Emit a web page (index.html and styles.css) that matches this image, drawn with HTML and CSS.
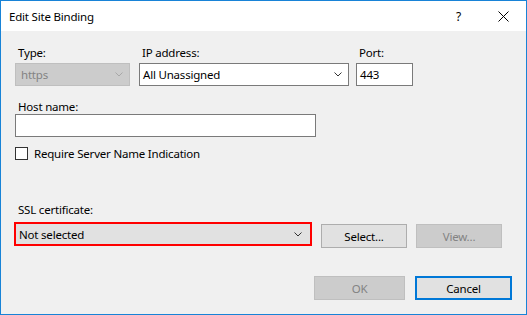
FILE: index.html
```html
<!DOCTYPE html>
<html lang="en">
<head>
    <meta charset="UTF-8">
    <title>Edit Site Binding</title>
    <link rel="stylesheet" href="styles.css">
</head>
<body>
    <div class="window">
        <div class="titlebar">
            <span class="title">Edit Site Binding</span>
            <span class="help">?</span>
            <span class="close">
                <svg width="11" height="11" viewBox="0 0 11 11"><path d="M0.5 0.5 L10.5 10.5 M10.5 0.5 L0.5 10.5" stroke="#000" stroke-width="1" fill="none"/></svg>
            </span>
        </div>
        <div class="content">
            <div class="row top-row">
                <div class="field f-type">
                    <label>Type:</label>
                    <div class="combo disabled">
                        <span>https</span>
                        <svg class="chev" width="8" height="5" viewBox="0 0 8 5"><polyline points="0.5,0.5 4,4 7.5,0.5" stroke="#a8a8a8" fill="none"/></svg>
                    </div>
                </div>
                <div class="field f-ip">
                    <label>IP address:</label>
                    <div class="combo">
                        <span>All Unassigned</span>
                        <svg class="chev" width="8" height="5" viewBox="0 0 8 5"><polyline points="0.5,0.5 4,4 7.5,0.5" stroke="#333" fill="none"/></svg>
                    </div>
                </div>
                <div class="field f-port">
                    <label>Port:</label>
                    <div class="textbox">443</div>
                </div>
            </div>
            <div class="field f-host">
                <label>Host name:</label>
                <div class="textbox"></div>
            </div>
            <div class="check-row">
                <span class="checkbox"></span>
                <span>Require Server Name Indication</span>
            </div>
            <div class="field f-ssl">
                <label>SSL certificate:</label>
                <div class="ssl-row">
                    <div class="combo ssl">
                        <span>Not selected</span>
                        <svg class="chev" width="8" height="5" viewBox="0 0 8 5"><polyline points="0.5,0.5 4,4 7.5,0.5" stroke="#333" fill="none"/></svg>
                    </div>
                    <button class="btn">Select...</button>
                    <button class="btn disabled">View...</button>
                </div>
            </div>
            <div class="footer">
                <button class="btn disabled ok">OK</button>
                <button class="btn default">Cancel</button>
            </div>
        </div>
    </div>
</body>
</html>
```

FILE: styles.css
```css
html, body {
    margin: 0;
    padding: 0;
}
body {
    font-family: 'Noto Sans', 'Open Sans', sans-serif;
    font-size: 11.5px;
    letter-spacing: -0.2px;
    color: #000;
}
.window {
    width: 527px;
    height: 315px;
    box-sizing: border-box;
    border: 1px solid #1883d7;
    display: flex;
    flex-direction: column;
    background-color: #f0f0f0;
}
.titlebar {
    height: 30px;
    background-color: #fff;
    display: flex;
    align-items: center;
    padding-left: 8px;
    flex-shrink: 0;
}
.title {
    flex: 1;
}
.help {
    width: 10px;
    margin-right: 32px;
    font-size: 12px;
}
.close {
    width: 11px;
    height: 11px;
    margin-right: 17px;
    display: flex;
}
.content {
    flex: 1;
    padding: 14px 0 0 14px;
}
label {
    display: block;
    line-height: 15px;
    height: 15px;
    padding-left: 3px;
    margin-bottom: 3px;
}
.top-row {
    display: flex;
}
.f-type {
    width: 115px;
    margin-right: 9px;
}
.f-ip {
    width: 210px;
    margin-right: 7px;
}
.f-port {
    width: 57px;
}
.combo, .textbox {
    box-sizing: border-box;
    height: 23px;
    border: 1px solid #7a7a7a;
    background-color: #fff;
    display: flex;
    align-items: center;
    padding: 0 5px 0 3px;
}
.combo span {
    flex: 1;
}
.combo.disabled {
    background-color: #cccccc;
    border-color: #bfbfbf;
    color: #838383;
    padding-left: 5px;
}
.chev {
    margin-right: 1px;
}
.f-host {
    margin-top: 13px;
}
.f-host label {
    margin-bottom: 0;
}
.f-host .textbox {
    width: 301px;
}
.check-row {
    display: flex;
    align-items: center;
    margin-top: 10px;
    height: 13px;
}
.checkbox {
    box-sizing: border-box;
    width: 13px;
    height: 13px;
    border: 1px solid #333;
    background-color: #fff;
    margin-right: 6px;
}
.f-ssl {
    margin-top: 42px;
}
.f-ssl label {
    margin-bottom: 5px;
}
.ssl-row {
    display: flex;
    align-items: flex-start;
    margin-left: -1px;
}
.combo.ssl {
    width: 298px;
    height: 24px;
    border: 2px solid #ff0000;
    background-color: #e1e1e1;
    padding-left: 3px;
    padding-right: 7px;
}
.btn {
    box-sizing: border-box;
    height: 24px;
    width: 86px;
    border: 1px solid #adadad;
    background-color: #e1e1e1;
    font-family: inherit;
    font-size: 11.5px;
    letter-spacing: -0.2px;
    color: #000;
    padding: 0;
    margin: 2px 0 0 9px;
}
.btn.disabled {
    background-color: #cccccc;
    border-color: #bfbfbf;
    color: #838383;
}
.footer {
    display: flex;
    justify-content: flex-end;
    margin-top: 28px;
    padding-right: 14px;
}
.footer .btn {
    margin: 0;
}
.footer .ok {
    width: 91px;
    margin-right: 10px;
}
.btn.default {
    width: 97px;
    border: 2px solid #0078d7;
}
```
